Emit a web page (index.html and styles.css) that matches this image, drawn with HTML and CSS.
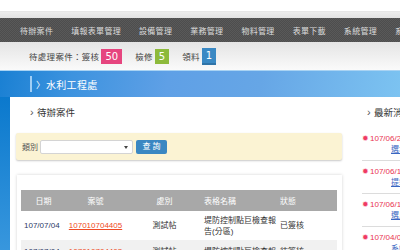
FILE: index.html
```html
<!DOCTYPE html>
<html lang="zh-Hant">
<head>
<meta charset="utf-8">
<title>水利工程處</title>
<link rel="stylesheet" href="styles.css">
</head>
<body>
<div class="page">
  <div class="topbar"></div>
  <div class="topline"></div>
  <nav class="nav">
    <span>待辦案件</span>
    <span>填報表單管理</span>
    <span>設備管理</span>
    <span>業務管理</span>
    <span>物料管理</span>
    <span>表單下載</span>
    <span>系統管理</span>
    <span>系統設定</span>
  </nav>
  <div class="status">
    <span class="lbl">待處理案件：簽核</span><span class="badge pink">50</span>
    <span class="lbl gap">檢修</span><span class="badge green">5</span>
    <span class="lbl gap">領料</span><span class="badge blue">1</span>
  </div>
  <div class="banner">
    <span class="bar"></span><span class="chev">〉</span><span class="btitle">水利工程處</span>
  </div>
  <div class="body">
    <div class="strip"></div>
    <div class="panel">
      <div class="ptitle"><span class="arrow">›</span>待辦案件</div>
      <div class="search">
        <span class="slabel">類別</span>
        <div class="select"><span class="caret"></span></div>
        <span class="btn">查 詢</span>
      </div>
      <div class="card">
        <table class="grid">
          <colgroup><col class="c1"><col class="c2"><col class="c3"><col class="c4"><col class="c5"></colgroup>
          <thead>
            <tr><th class="ctr">日期</th><th class="ctr">案號</th><th class="ctr">處別</th><th>表格名稱</th><th class="st">狀態</th></tr>
          </thead>
          <tbody>
            <tr><td class="ctr date">107/07/04</td><td class="ctr"><a class="case">107010704405</a></td><td class="ctr">測試帖</td><td>堤防控制點巨檢查報告(分區)</td><td class="st">已簽核</td></tr>
            <tr class="alt"><td class="ctr date">107/07/04</td><td class="ctr"><a class="case">107010704403</a></td><td class="ctr">測試帖</td><td>堤防控制點巨檢查報告(分區)</td><td class="st">待簽核</td></tr>
          </tbody>
        </table>
      </div>
    </div>
    <div class="side">
      <div class="stitle"><span class="arrow">›</span>最新消息</div>
      <ul class="news">
        <li><div class="nd"><span class="star">✹</span>107/06/29</div><a class="nl">選址公告</a></li>
        <li><div class="nd"><span class="star">✹</span>107/06/15</div><a class="nl">提報說明</a></li>
        <li><div class="nd"><span class="star">✹</span>107/06/11</div><a class="nl">選用說明</a></li>
        <li><div class="nd"><span class="star">✹</span>107/04/02</div><a class="nl">系統公告</a></li>
      </ul>
    </div>
  </div>
</div>
</body>
</html>
```

FILE: styles.css
```css
html, body { margin: 0; padding: 0; }
body {
  width: 400px; height: 250px; overflow: hidden; background: #fff;
  font-family: "Liberation Sans", "Noto Sans CJK TC", sans-serif;
  color: #333;
}
.page { width: 400px; }
.topbar { height: 11px; background: #fff; }
.topline { height: 7px; background: linear-gradient(#ececec, #e2e2e2); border-top: 1px solid #e6e6e6; box-sizing: border-box; }
.nav {
  height: 24px; display: flex; align-items: center; gap: 18px; padding-left: 20px;
  background-color: #535353;
  background-image: repeating-conic-gradient(#4d4d4d 0 25%, #595959 0 50%);
  background-size: 2px 2px;
  color: #dcdcdc; font-size: 8px; letter-spacing: 0.3px; white-space: nowrap; overflow: hidden;
}
.status {
  height: 29px; display: flex; align-items: center; padding-left: 29px;
  background: linear-gradient(#e4e4e4, #fafafa); font-size: 8.5px; color: #444;
  box-sizing: border-box; border-bottom: 1px solid #a9d3f3;
}
.status .lbl { letter-spacing: 0.3px; }
.status .gap { margin-left: 13px; }
.badge {
  margin-left: 2px; height: 15px; line-height: 15px; padding: 0 4px; font-size: 10px; color: #fff;
  font-family: "DejaVu Sans", sans-serif;
}
.pink { background: #e6457f; padding: 0 4px; }
.green { background: #8dba3c; }
.blue { background: #3a89c4; border-bottom: 2px solid #2f74a8; height: 15px; }
.banner {
  height: 26px; display: flex; align-items: center; padding-left: 30px;
  background: linear-gradient(100deg, #1a80d3 0%, #3d93df 18%, #5fa0e6 42%, #66a6e6 65%, #7cc3f1 100%);
  color: #fff;
}
.bar { width: 2px; height: 16px; background: rgba(200,230,255,.75); }
.chev { font-size: 9px; margin-left: 4px; width: 10px; }
.btitle { font-size: 10px; letter-spacing: 0.3px; }
.body { display: flex; }
.strip { width: 10px; height: 160px; background: linear-gradient(#0b79cd, #3a98de); flex: none; }
.panel { width: 326px; padding-left: 6px; flex: none; }
.ptitle, .stitle { height: 30px; line-height: 30px; font-size: 9.5px; color: #333; }
.ptitle { padding-left: 14px; }
.arrow { display: inline-block; width: 7px; font-size: 11px; color: #555; }
.search {
  margin-top: 6px; height: 27px; background: #fbf3d3; display: flex; align-items: center; padding-left: 6px;
  box-shadow: 0 1px 2px rgba(0,0,0,.22); border-radius: 2px;
}
.slabel { font-size: 8px; color: #555; width: 18px; }
.select {
  position: relative; width: 93px; height: 14px; box-sizing: border-box; background: #fff;
  border: 1px solid #d4d4d4; border-radius: 2px;
}
.caret {
  position: absolute; right: 4px; top: 5px; width: 0; height: 0;
  border-left: 2px solid transparent; border-right: 2px solid transparent; border-top: 3px solid #444;
}
.btn {
  margin-left: 3px; width: 31px; height: 14px; line-height: 14px; text-align: center;
  background: #3a87c2; color: #fff; font-size: 8px; border-radius: 2px;
}
.card {
  margin: 15px 0 0 1px; padding: 15px 5px 0 4px; background: #fff;
  box-shadow: 0 0 3px rgba(0,0,0,.18); height: 80px;
}
.grid { width: 316px; border-collapse: collapse; table-layout: fixed; font-size: 8px; }
.c1 { width: 45px; } .c2 { width: 59px; } .c3 { width: 79px; } .c4 { width: 74px; } .c5 { width: 59px; }
.grid th { height: 21px; background: #a8a8a8; color: #fff; font-weight: normal; text-align: left; padding: 0; }
.grid td { height: 29px; padding: 0; line-height: 11px; color: #333; vertical-align: middle; }
.grid .alt td { padding-top: 6px; vertical-align: top; }
.grid .ctr { text-align: center; }
.grid .st { padding-left: 2px; }
.grid td.date { color: #2d3a66; text-align: left; padding-left: 3px; }
.case { color: #ef4a25; text-decoration: underline; }
.alt td { background: #f1f1f1; }
.side { flex: 1; padding-left: 20px; }
.stitle { padding-left: 5px; }
.news { list-style: none; margin: 1px 0 0; padding: 0; }
.news li { height: 22px; padding: 5px 0; border-bottom: 1px solid #dcdcdc; font-size: 8px; white-space: nowrap; }
.nd { height: 11px; line-height: 11px; color: #e9334f; }
.star { display: inline-block; width: 8px; color: #ef3a63; font-size: 8px; font-family: "DejaVu Sans", sans-serif; }
.nl { display: block; height: 11px; line-height: 11px; padding-left: 29px; color: #3a66c2; text-decoration: underline; }
```
